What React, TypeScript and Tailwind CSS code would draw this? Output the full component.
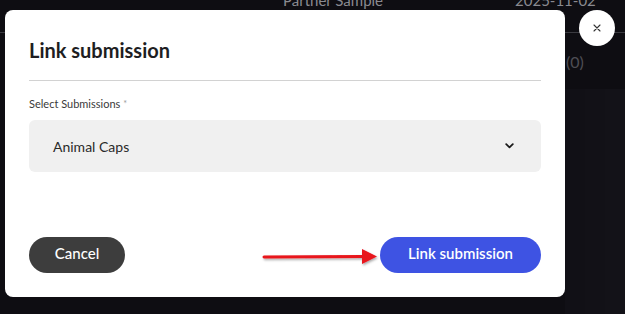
import React from "react";

export default function App() {
  const font = { fontFamily: "Lato, 'Open Sans', sans-serif" };
  return (
    <div className="relative w-[625px] h-[314px] overflow-hidden bg-[#0e0d12]" style={font}>
      {/* background page content */}
      <div className="flex flex-col">
        <div className="flex h-[33px] items-start border-b border-[#3a3a40]">
          <div className="ml-[283px] -mt-[10px] text-[15px] leading-[20px] text-[#8a8a90]">Partner Sample</div>
          <div className="ml-[132px] -mt-[10px] text-[15px] leading-[20px] text-[#8a8a90]">2025-11-02</div>
        </div>
        <div className="flex h-[56px]">
          <div className="ml-[566px] mt-[19px] text-[16px] leading-[20px] text-[#4e4e55]">(0)</div>
        </div>
        <div className="flex h-[225px]">
          <div className="ml-[565px] w-[20px] bg-[#111016]" />
          <div className="w-[20px] bg-[#121117]" />
          <div className="w-[20px] bg-[#131218]" />
        </div>
      </div>

      {/* modal */}
      <div className="absolute left-[5px] top-[10px] w-[560px] h-[287px] rounded-[8px] bg-white px-[24px] pt-[24px] pb-[24px] flex flex-col">
        <h2 className="text-[20px] leading-[32px] font-bold text-[#1e1e22]">Link submission</h2>
        <div className="mt-[14px] h-px bg-[#d2d2d2]" />
        <div className="mt-[15px] text-[11px] leading-[16px] text-[#3a3a3a]">
          Select Submissions <span className="text-[#9a9a9a] text-[9px] align-top">*</span>
        </div>
        <div className="mt-[8px] h-[52px] rounded-[6px] bg-[#f0f0f0] flex items-center justify-between pl-[24px] pr-[27px]">
          <span className="text-[14px] text-[#2a2a2a]">Animal Caps</span>
          <svg width="9" height="6" viewBox="0 0 9 6">
            <path d="M1.2 1.2 L4.5 4.4 L7.8 1.2" fill="none" stroke="#1a1a1a" strokeWidth="1.8" strokeLinecap="round" strokeLinejoin="round" />
          </svg>
        </div>
        <div className="mt-auto flex items-center justify-between">
          <button className="h-[36px] w-[96px] pb-[3px] rounded-full bg-[#3d3d3d] text-white text-[15px] font-medium">Cancel</button>
          <button className="h-[36px] w-[161px] pb-[3px] rounded-full bg-[#3e53e3] text-white text-[15px] font-semibold">Link submission</button>
        </div>
        {/* annotation arrow */}
        <svg className="absolute left-[256px] top-[235px]" width="120" height="24" viewBox="0 0 120 24">
          <defs>
            <filter id="sh" x="-10%" y="-50%" width="120%" height="200%">
              <feDropShadow dx="1" dy="1.5" stdDeviation="1" floodColor="#000" floodOpacity="0.35" />
            </filter>
          </defs>
          <g filter="url(#sh)">
            <line x1="3" y1="12" x2="102" y2="11.5" stroke="#e8141a" strokeWidth="3" strokeLinecap="round" />
            <polygon points="101,4 116,11.5 101,19" fill="#e8141a" />
          </g>
        </svg>
      </div>

      {/* close button */}
      <div className="absolute left-[579px] top-[10px] w-[36px] h-[36px] rounded-full bg-white flex items-center justify-center">
        <svg width="8" height="8" viewBox="0 0 8 8">
          <path d="M1 1 L7 7 M7 1 L1 7" stroke="#333" strokeWidth="1.1" strokeLinecap="round" />
        </svg>
      </div>
    </div>
  );
}
